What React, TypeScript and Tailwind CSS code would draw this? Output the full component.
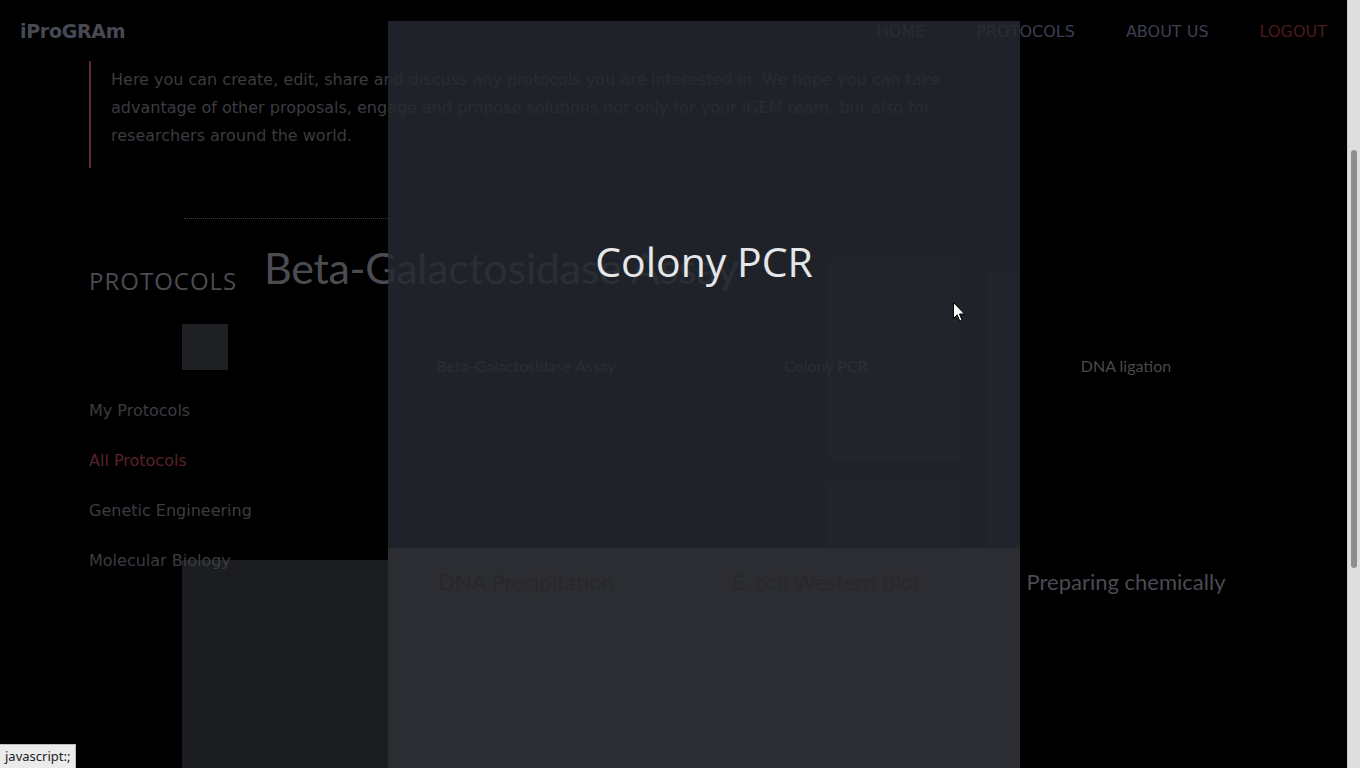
const NAV = [
  { label: "HOME", cls: "text-[#3c3f52]" },
  { label: "PROTOCOLS", cls: "text-[#3c3f52]" },
  { label: "ABOUT US", cls: "text-[#3c3f52]" },
  { label: "LOGOUT", cls: "text-[#4d1a1c]" },
];

const LINKS = [
  { label: "My Protocols", active: false },
  { label: "All Protocols", active: true },
  { label: "Genetic Engineering", active: false },
  { label: "Molecular Biology", active: false },
];

const ROW_ONE = ["Beta-Galactosidase Assay", "Colony PCR", "DNA ligation"];
const ROW_TWO = ["DNA Precipitation", "E. coli Western Blot", "Preparing chemically"];

function Header() {
  return (
    <header className="flex h-[61px] items-center justify-between pl-[20px] pr-[20px] pt-[2px]">
      <span className="font-['DejaVu_Sans',sans-serif] text-[19px] font-bold tracking-[-0.3px] text-[#474a54]">
        iProGRAm
      </span>
      <nav className="flex gap-[51px] font-['DejaVu_Sans',sans-serif] text-[16px]">
        {NAV.map((n) => (
          <a key={n.label} href="javascript:;" className={n.cls}>
            {n.label}
          </a>
        ))}
      </nav>
    </header>
  );
}

function Intro() {
  return (
    <blockquote className="ml-[89px] border-l-2 border-[#5a2d30] pb-[18px] pl-[20px] pt-[5px] font-['DejaVu_Sans',sans-serif] text-[16px] leading-[28px] text-[#3b3c41]">
      Here you can create, edit, share and discuss any protocols you are interested in. We hope you can take
      <br />
      advantage of other proposals, engage and propose solutions not only for your iGEM team, but also for
      <br />
      researchers around the world.
    </blockquote>
  );
}

function Sidebar() {
  return (
    <aside className="relative z-10 ml-[89px] flex w-[175px] shrink-0 flex-col pt-[25px]">
      <h2 className="font-['Open_Sans',sans-serif] text-[24px] leading-[32px] tracking-[1px] text-[#4a4c53]">PROTOCOLS</h2>
      <div className="ml-[93px] mt-[27px] h-[46px] w-[46px] bg-[#1f2024]" />
      <ul className="mt-[29px] flex flex-col gap-[26px] font-['DejaVu_Sans',sans-serif] text-[16px] leading-[24px]">
        {LINKS.map((l) => (
          <li key={l.label} className="whitespace-nowrap">
            <a href="javascript:;" className={l.active ? "text-[#5a2228]" : "text-[#3b3c41]"}>
              {l.label}
            </a>
          </li>
        ))}
      </ul>
    </aside>
  );
}

function Catalogue() {
  return (
    <section className="flex min-w-0 flex-col">
      <h1 className="whitespace-nowrap font-['Lato',sans-serif] text-[43px] leading-[56px] tracking-[-0.3px] text-[#4b4c51]">
        Beta-Galactosidase Assay
      </h1>
      <div className="ml-[112px] mt-[60px] grid grid-cols-[300px_300px_300px]">
        {ROW_ONE.map((t) => (
          <div key={t} className="h-[212px] text-center font-['Lato',sans-serif] text-[16px] leading-[20px] text-[#48494e]">
            {t}
          </div>
        ))}
        {ROW_TWO.map((t) => (
          <div key={t} className="h-[200px] text-center font-['Lato',sans-serif] text-[22px] leading-[28px] text-[#4a4b52]">
            {t}
          </div>
        ))}
      </div>
    </section>
  );
}

function Viewer() {
  return (
    <div className="absolute bottom-0 left-[388px] top-[21px] flex w-[632px] flex-col">
      <div className="relative h-[527px] bg-[#252930]/85">
        <div className="absolute left-[438px] top-[237px] h-[203px] w-[135px] bg-white/[0.012]" />
        <div className="absolute left-[438px] top-[460px] h-[67px] w-[135px] bg-white/[0.012]" />
        <div className="absolute left-[599px] top-[250px] h-[277px] w-[33px] bg-white/[0.012]" />
        <h3 className="pt-[212px] text-center font-['Open_Sans',sans-serif] text-[41px] leading-[56px] text-[#e6e7e9]">
          Colony PCR
        </h3>
      </div>
      <div className="flex-1 bg-[#2c2d32]">
        <div className="ml-[-12px] grid grid-cols-[300px_300px] pt-[20px] font-['Lato',sans-serif] text-[22px] leading-[28px] text-[#27282c]">
          <span className="text-center">DNA Precipitation</span>
          <span className="text-center">E. coli Western Blot</span>
        </div>
      </div>
    </div>
  );
}

function Pointer() {
  return (
    <svg className="absolute left-[953px] top-[302px]" width="13" height="21" viewBox="0 0 13 21">
      <path
        d="M0.5 0.5 L0.5 16.5 L4.2 12.8 L6.8 19 L9 18 L6.5 12 L11.5 12 Z"
        fill="#fff"
        stroke="#000"
        strokeWidth="1"
        strokeLinejoin="round"
      />
    </svg>
  );
}

function Scrollbar() {
  return (
    <div className="flex w-[13px] shrink-0 flex-col border-l border-[#cfcfcf] bg-[#dedede]">
      <div className="mx-[3px] mt-[150px] h-[418px] rounded-full bg-[#8e8e8e]" />
    </div>
  );
}

export default function App() {
  return (
    <div className="relative flex h-[768px] w-full overflow-hidden bg-black">
      <div className="relative min-w-0 flex-1">
        <Header />
        <Intro />
        <div className="ml-[184px] mt-[50px] w-[342px] border-t border-dotted border-[#3d3d3d]" />
        <div className="mt-[21px] flex">
          <Sidebar />
          <Catalogue />
        </div>
        <div className="absolute left-[182px] top-[560px] h-[208px] w-[206px] bg-[#1c1d20]" />
        <Viewer />
        <Pointer />
      </div>
      <Scrollbar />
      <div className="absolute bottom-0 left-0 flex h-[24px] items-center border-r border-t border-[#bdbdbd] bg-[#ebebeb] px-[5px] font-['Noto_Sans',sans-serif] text-[13px] text-[#1c1c28]">
        javascript:;
      </div>
    </div>
  );
}
